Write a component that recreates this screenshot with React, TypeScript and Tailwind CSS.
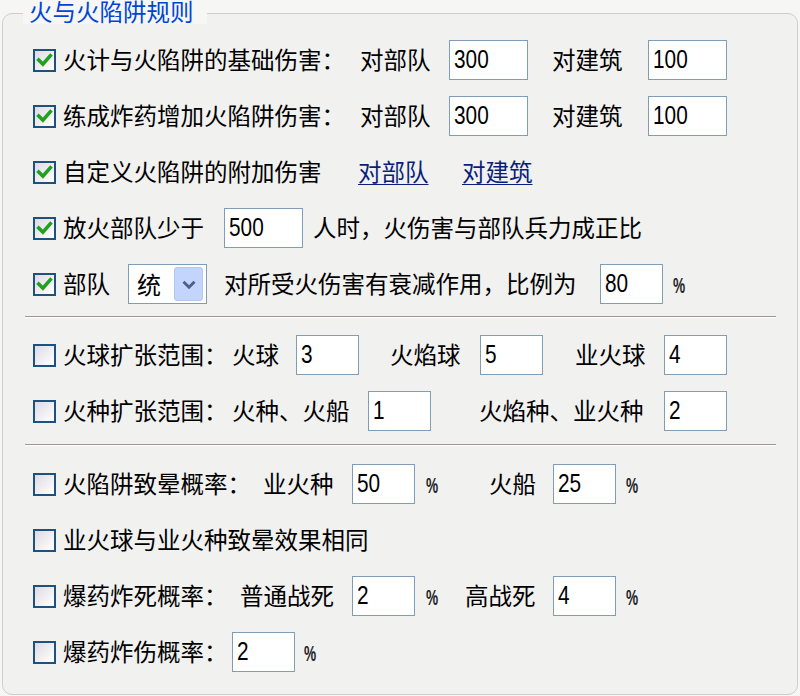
import React from 'react';

const cjk = "font-['Noto_Sans_CJK_SC',sans-serif]";

function Box({ on }: { on?: boolean }) {
  return (
    <span className="w-[23px] h-[23px] shrink-0 border-2 border-[#1c5180] bg-linear-to-br from-[#dedbe3] to-white flex items-center justify-center">
      {on && (
        <svg width="19" height="19" viewBox="0 0 18 18">
          <path d="M3.5 8.5 L7.5 12.5 L14.5 4.5" fill="none" stroke="#21a121" strokeWidth="3.4" strokeLinecap="square" />
        </svg>
      )}
    </span>
  );
}

function Field({ value, className }: { value: string; className: string }) {
  return (
    <span
      className={`h-[40px] shrink-0 bg-white border border-[#7f9db9] pl-[4px] flex items-center text-black text-[26px] leading-none font-['Liberation_Sans',sans-serif] ${className}`}
    >
      <span className="-mt-[2px] inline-block origin-left scale-x-[0.8]">{value}</span>
    </span>
  );
}

function Pct() {
  return (
    <span className="inline-block origin-left scale-x-[0.62] text-[22px] leading-none text-[#222] font-['Liberation_Sans',sans-serif] font-bold">
      %
    </span>
  );
}

function Row({ on, children }: { on?: boolean; children: React.ReactNode }) {
  return (
    <div className="h-[56px] flex items-center pl-[30px]">
      <Box on={on} />
      <div className="ml-[7px] flex items-center text-[23.5px] leading-none text-black whitespace-nowrap">{children}</div>
    </div>
  );
}

function Separator({ className }: { className: string }) {
  return <div className={`ml-[22px] w-[751px] h-[2px] border-t border-[#9c9891] border-b border-b-white ${className}`} />;
}

export default function App() {
  return (
    <div className={`w-[800px] h-[696px] bg-[#f6f6f5] pt-[13px] pl-[2px] ${cjk}`}>
      <div className="relative w-[796px] h-[682px] border border-[#cfcfc6] rounded-[10px] bg-[#f1f1f0] pt-[18px]">
        {/* Group title */}
        <div className="absolute left-[20px] -top-[14px] bg-[#f6f6f5] pl-[6px] pr-[13px] text-[23.5px] leading-none text-[#0046d5]">
          火与火陷阱规则
        </div>

        <Row on>
          <span className="w-[297px]">火计与火陷阱的基础伤害：</span>
          <span className="w-[89px]">对部队</span>
          <Field value="300" className="w-[79px]" />
          <span className="ml-[24px] w-[96px]">对建筑</span>
          <Field value="100" className="w-[79px]" />
        </Row>
        <Row on>
          <span className="w-[297px]">练成炸药增加火陷阱伤害：</span>
          <span className="w-[89px]">对部队</span>
          <Field value="300" className="w-[79px]" />
          <span className="ml-[24px] w-[96px]">对建筑</span>
          <Field value="100" className="w-[79px]" />
        </Row>
        <Row on>
          <span className="w-[295px]">自定义火陷阱的附加伤害</span>
          <a className="w-[104px] text-[#0a1f7a] underline underline-offset-[3px] decoration-1">对部队</a>
          <a className="text-[#0a1f7a] underline underline-offset-[3px] decoration-1">对建筑</a>
        </Row>
        <Row on>
          <span className="w-[161px]">放火部队少于</span>
          <Field value="500" className="w-[79px]" />
          <span className="ml-[10px]">人时，火伤害与部队兵力成正比</span>
        </Row>
        <Row on>
          <span className="w-[65px]">部队</span>
          <span className="w-[79px] h-[40px] bg-white border border-[#7f9db9] flex items-center justify-between pl-[8px] pr-[3px] text-[24px]">
            <span>统</span>
            <span className="w-[29px] h-[34px] rounded-[3px] bg-[#c3d5fc] border border-[#b2c6f2] flex items-center justify-center">
              <svg width="16" height="11" viewBox="0 0 14 10">
                <path d="M2 2.5 L7 7.5 L12 2.5" fill="none" stroke="#4d6185" strokeWidth="2.6" />
              </svg>
            </span>
          </span>
          <span className="ml-[17px] w-[376px]">对所受火伤害有衰减作用，比例为</span>
          <Field value="80" className="w-[63px]" />
          <span className="ml-[10px]"><Pct /></span>
        </Row>

        <Separator className="mt-[4px]" />

        <div className="mt-[9px]">
          <Row>
            <span className="w-[169px]">火球扩张范围：</span>
            <span className="w-[64px]">火球</span>
            <Field value="3" className="w-[63px]" />
            <span className="ml-[31px] w-[90px]">火焰球</span>
            <Field value="5" className="w-[63px]" />
            <span className="ml-[32px] w-[89px]">业火球</span>
            <Field value="4" className="w-[63px]" />
          </Row>
          <Row>
            <span className="w-[169px]">火种扩张范围：</span>
            <span className="w-[136px]">火种、火船</span>
            <Field value="1" className="w-[63px]" />
            <span className="ml-[48px] w-[185px]">火焰种、业火种</span>
            <Field value="2" className="w-[63px]" />
          </Row>
        </div>

        <Separator className="mt-[5px]" />

        <div className="mt-[10px]">
          <Row>
            <span className="w-[200px]">火陷阱致晕概率：</span>
            <span className="w-[89px]">业火种</span>
            <Field value="50" className="w-[63px]" />
            <span className="ml-[11px] w-[63px]"><Pct /></span>
            <span className="w-[64px]">火船</span>
            <Field value="25" className="w-[63px]" />
            <span className="ml-[10px]"><Pct /></span>
          </Row>
          <Row>
            <span>业火球与业火种致晕效果相同</span>
          </Row>
          <Row>
            <span className="w-[177px]">爆药炸死概率：</span>
            <span className="w-[112px]">普通战死</span>
            <Field value="2" className="w-[63px]" />
            <span className="ml-[11px] w-[39px]"><Pct /></span>
            <span className="w-[88px]">高战死</span>
            <Field value="4" className="w-[63px]" />
            <span className="ml-[10px]"><Pct /></span>
          </Row>
          <Row>
            <span className="w-[169px]">爆药炸伤概率：</span>
            <Field value="2" className="w-[63px]" />
            <span className="ml-[9px]"><Pct /></span>
          </Row>
        </div>
      </div>
    </div>
  );
}
